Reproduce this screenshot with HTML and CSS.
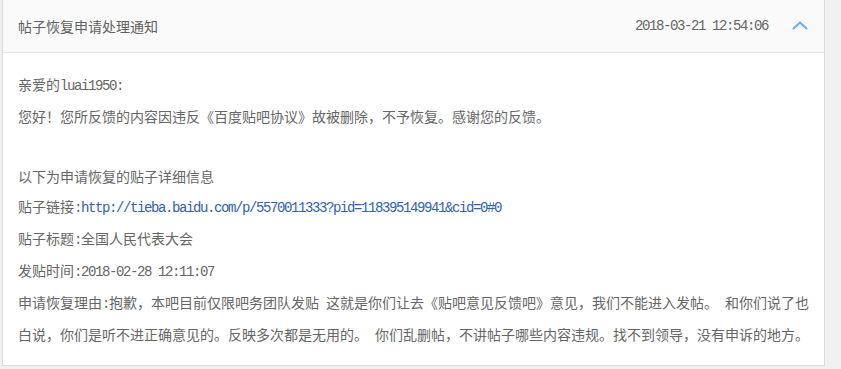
FILE: index.html
```html
<!DOCTYPE html>
<html lang="zh-CN">
<head>
<meta charset="utf-8">
<title>帖子恢复申请处理通知</title>
<link rel="stylesheet" href="styles.css">
</head>
<body>
<div class="page">
  <div class="card">
    <div class="card-head">
      <span class="title">帖子恢复申请处理通知</span>
      <span class="time en">2018-03-21 12:54:06</span>
      <svg class="chevron" width="16" height="9" viewBox="0 0 16 9" aria-hidden="true"><polyline points="1,8 8,1.5 15,8" fill="none" stroke="#5aaef5" stroke-width="2"/></svg>
    </div>
    <div class="card-body">
      <p>亲爱的<span class="en">luai1950:</span></p>
      <p>您好！您所反馈的内容因违反《百度贴吧协议》故被删除，不予恢复。感谢您的反馈。</p>
      <p class="blank"></p>
      <p>以下为申请恢复的贴子详细信息</p>
      <p>贴子链接<span class="en">:</span><a class="link en" href="#">http://tieba.baidu.com/p/5570011333?pid=118395149941&amp;cid=0#0</a></p>
      <p>贴子标题<span class="en">:</span>全国人民代表大会</p>
      <p>发贴时间<span class="en">:2018-02-28 12:11:07</span></p>
      <p>申请恢复理由<span class="en">:</span>抱歉，本吧目前仅限吧务团队发贴<span class="en"> </span>这就是你们让去《贴吧意见反馈吧》意见，我们不能进入发帖。<span class="en"> </span>和你们说了也白说，你们是听不进正确意见的。反映多次都是无用的。<span class="en"> </span>你们乱删帖，不讲帖子哪些内容违规。找不到领导，没有申诉的地方。</p>
    </div>
  </div>
  <div class="card card-next">
    <div class="card-head card-head-cut"></div>
  </div>
</div>
</body>
</html>
```
FILE: styles.css
```css
html, body {
  margin: 0;
  padding: 0;
  background: #f0f0f0;
}
body {
  font-family: "Noto Sans CJK SC", "Liberation Sans", sans-serif;
  font-size: 14px;
  color: #666;
  text-autospace: no-autospace;
  text-spacing-trim: space-all;
  height: 369px;
  overflow: hidden;
}
.page {
  padding-left: 2px;
}
.card {
  box-sizing: border-box;
  width: 823px;
  background: #fff;
  border: 1px solid #dcdcdc;
  border-top: 0;
}
.card-next {
  margin-top: 12px;
  border-top: 1px solid #dcdcdc;
  border-bottom: 0;
}
.card-head {
  box-sizing: border-box;
  height: 53px;
  display: flex;
  align-items: center;
  padding: 0 16px 0 15px;
  background: #fafafa;
  border-bottom: 1px solid #e6e6e6;
}
.card-head-cut {
  height: 2px;
  border-bottom: 0;
}
.title {
  flex: 1;
  color: #5f5f5f;
}
.time {
  color: #666;
  margin-right: 24px;
}
.chevron {
  display: block;
  margin-top: -2px;
}
.en {
  font-family: "Liberation Mono", monospace;
  font-size: 14px;
  letter-spacing: -1.4px;
}
.card-body {
  padding: 16px 12px 14px 15px;
  line-height: 30px;
}
.card-body p {
  margin: 0;
}
.blank {
  height: 30px;
}
.link {
  color: #2d62b6;
  text-decoration: none;
}
```
